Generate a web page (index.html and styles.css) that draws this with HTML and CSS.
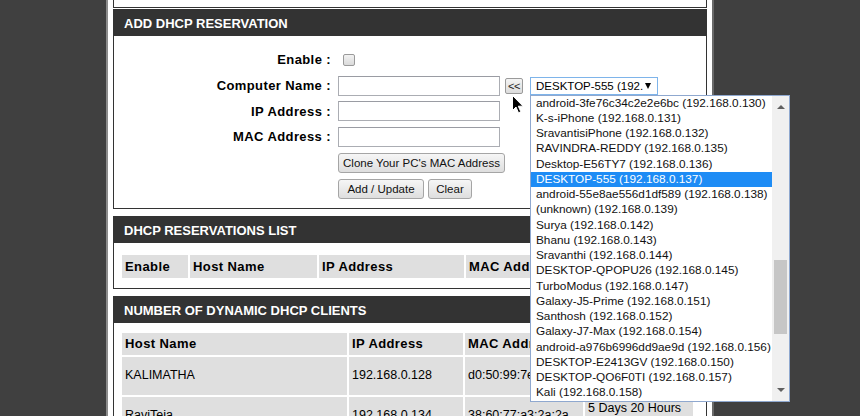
FILE: index.html
```html
<!DOCTYPE html>
<html lang="en">

<head>
    <title>DHCP Reservation</title>
    <link rel="stylesheet" href="styles.css">
</head>

<body>
    <div class="page">
        <!-- end of the section above -->
        <div class="box box-tail"></div>

        <div class="box">
            <div class="box-head">ADD DHCP RESERVATION</div>
            <div class="box-body form">
                <label class="form-label">Enable :</label>
                <div class="form-field"><input type="checkbox" class="check"></div>

                <label class="form-label">Computer Name :</label>
                <div class="form-field">
                    <input type="text" class="text-input">
                    <button class="pick-btn">&lt;&lt;</button>
                    <div class="select">
                        <span class="select-text">DESKTOP-555 (192.</span>
                        <span class="select-arrow"></span>
                        <!-- opened list of the select -->
                        <div class="dropdown">
                            <div class="dropdown-items">
                                <div class="dropdown-item">android-3fe76c34c2e2e6bc (192.168.0.130)</div>
                                <div class="dropdown-item">K-s-iPhone (192.168.0.131)</div>
                                <div class="dropdown-item">SravantisiPhone (192.168.0.132)</div>
                                <div class="dropdown-item">RAVINDRA-REDDY (192.168.0.135)</div>
                                <div class="dropdown-item">Desktop-E56TY7 (192.168.0.136)</div>
                                <div class="dropdown-item selected">DESKTOP-555 (192.168.0.137)</div>
                                <div class="dropdown-item">android-55e8ae556d1df589 (192.168.0.138)</div>
                                <div class="dropdown-item">(unknown) (192.168.0.139)</div>
                                <div class="dropdown-item">Surya (192.168.0.142)</div>
                                <div class="dropdown-item">Bhanu (192.168.0.143)</div>
                                <div class="dropdown-item">Sravanthi (192.168.0.144)</div>
                                <div class="dropdown-item">DESKTOP-QPOPU26 (192.168.0.145)</div>
                                <div class="dropdown-item">TurboModus (192.168.0.147)</div>
                                <div class="dropdown-item">Galaxy-J5-Prime (192.168.0.151)</div>
                                <div class="dropdown-item">Santhosh (192.168.0.152)</div>
                                <div class="dropdown-item">Galaxy-J7-Max (192.168.0.154)</div>
                                <div class="dropdown-item">android-a976b6996dd9ae9d (192.168.0.156)</div>
                                <div class="dropdown-item">DESKTOP-E2413GV (192.168.0.150)</div>
                                <div class="dropdown-item">DESKTOP-QO6F0TI (192.168.0.157)</div>
                                <div class="dropdown-item">Kali (192.168.0.158)</div>
                            </div>
                            <div class="scrollbar">
                                <div class="scroll-btn"><span class="arrow-up"></span></div>
                                <div class="scroll-track"><div class="scroll-thumb"></div></div>
                                <div class="scroll-btn"><span class="arrow-down"></span></div>
                            </div>
                        </div>
                    </div>
                    <!-- mouse pointer -->
                    <svg class="cursor" width="12" height="19" viewBox="0 0 12 19">
                        <path d="M0.5 0.5 L0.5 15.5 L4 12 L6.5 17.8 L8.8 16.8 L6.3 11.2 L11 11.2 Z" fill="#000" stroke="#fff" stroke-width="1"/>
                    </svg>
                </div>

                <label class="form-label">IP Address :</label>
                <div class="form-field"><input type="text" class="text-input"></div>

                <label class="form-label">MAC Address :</label>
                <div class="form-field"><input type="text" class="text-input"></div>

                <div></div>
                <div class="form-field"><button class="btn btn-clone">Clone Your PC's MAC Address</button></div>

                <div></div>
                <div class="form-field">
                    <button class="btn btn-add">Add / Update</button>
                    <button class="btn btn-clear">Clear</button>
                </div>
            </div>
        </div>

        <div class="box box-list">
            <div class="box-head">DHCP RESERVATIONS LIST</div>
            <div class="box-body">
                <table class="grid">
                    <colgroup>
                        <col style="width: 66px">
                        <col style="width: 127px">
                        <col style="width: 145px">
                        <col>
                    </colgroup>
                    <tr class="grid-head">
                        <td>Enable</td>
                        <td>Host Name</td>
                        <td>IP Address</td>
                        <td>MAC Address</td>
                    </tr>
                </table>
            </div>
        </div>

        <div class="box box-clients">
            <div class="box-head">NUMBER OF DYNAMIC DHCP CLIENTS</div>
            <div class="box-body">
                <table class="grid">
                    <colgroup>
                        <col style="width: 225px">
                        <col style="width: 114px">
                        <col style="width: 118px">
                        <col style="width: 108px">
                    </colgroup>
                    <tr class="grid-head">
                        <td>Host Name</td>
                        <td>IP Address</td>
                        <td>MAC Address</td>
                        <td>Expired Time</td>
                    </tr>
                    <tr class="grid-row">
                        <td>KALIMATHA</td>
                        <td>192.168.0.128</td>
                        <td>d0:50:99:7e:1c:4b</td>
                        <td>5 Days 21 Hours 12 Minutes</td>
                    </tr>
                    <tr class="grid-row">
                        <td>RaviTeja</td>
                        <td>192.168.0.134</td>
                        <td>38:60:77:a3:2a:2a</td>
                        <td>5 Days 20 Hours 41 Minutes</td>
                    </tr>
                </table>
            </div>
        </div>
    </div>
</body>

</html>
```

FILE: styles.css
```css
body {
    margin: 0;
    padding: 0;
    background-color: #404040;
    font-family: "Liberation Sans", Arial, sans-serif;
    color: #000;
    overflow: hidden;
}

/* white column in the middle */
.page {
    width: 594px;
    min-height: 100vh;
    margin-left: 106px;
    padding: 0 5px;
    background-color: #fff;
    border-left: 2px solid #8c8c8c;
    border-right: 2px solid #6a6a6a;
}

/* section boxes */
.box {
    border: 1px solid #333;
    background-color: #fff;
    margin-top: 7px;
}

.box-tail {
    height: 7px;
    border-top: none;
    margin-top: 0;
}

.box-tail + .box {
    margin-top: 1px;
}

.box-head {
    height: 26px;
    line-height: 27px;
    padding-left: 10px;
    background-color: #333;
    color: #fff;
    font-size: 13px;
    font-weight: bold;
}

.box-list .box-body {
    padding: 10px 0 8px 6px;
}

.box-clients .box-body {
    padding: 8px 0 0 6px;
    height: 120px;
}

/* add reservation form */
.form {
    display: grid;
    grid-template-columns: 217px 1fr;
    grid-auto-rows: 25.8px;
    column-gap: 7px;
    padding: 11px 0 6px 0;
}

.form-label {
    text-align: right;
    font-size: 13px;
    font-weight: bold;
    letter-spacing: 0.4px;
    line-height: 25.8px;
}

.form-field {
    display: flex;
    align-items: center;
    position: relative;
}

.check {
    appearance: none;
    width: 12px;
    height: 12px;
    margin: 0 0 0 5px;
    border: 1px solid #9a9a9a;
    border-radius: 2px;
    background: linear-gradient(#f2f2f2, #dadada);
}

.text-input {
    box-sizing: border-box;
    width: 162px;
    height: 20px;
    margin: 0;
    border: 1px solid #abadb3;
    border-top-color: #9a9ca3;
    background-color: #fff;
}

.pick-btn {
    box-sizing: border-box;
    width: 18px;
    height: 16px;
    margin: 1px 0 0 5px;
    padding: 0;
    border: 1px solid #9a9a9a;
    border-radius: 2px;
    background: linear-gradient(#f4f4f4, #dcdcdc);
    font-family: "Liberation Sans", Arial, sans-serif;
    font-size: 11px;
    line-height: 13px;
    letter-spacing: -0.5px;
    color: #222;
}

.select {
    position: relative;
    box-sizing: border-box;
    width: 128px;
    height: 18px;
    margin-left: 7px;
    padding: 0 5px;
    display: flex;
    align-items: center;
    justify-content: space-between;
    border: 1px solid #7eb4ea;
    background-color: #fff;
    font-size: 11.5px;
}

.select-text {
    white-space: nowrap;
    overflow: hidden;
}

.select-arrow {
    width: 0;
    height: 0;
    margin-right: 1px;
    border-left: 3.5px solid transparent;
    border-right: 3.5px solid transparent;
    border-top: 6px solid #000;
}

/* the open option list */
.dropdown {
    position: absolute;
    top: 17px;
    left: -1px;
    z-index: 10;
    display: flex;
    width: 258px;
    border: 1px solid #8fa8cf;
    background-color: #fff;
}

.dropdown-items {
    width: 241px;
}

.dropdown-item {
    height: 15.26px;
    line-height: 15.26px;
    padding-left: 5px;
    font-size: 11.8px;
    white-space: nowrap;
    color: #111;
}

.dropdown-item.selected {
    background-color: #1e8cf5;
    color: #fff;
}

.scrollbar {
    width: 17px;
    display: flex;
    flex-direction: column;
    background-color: #f0f0f0;
}

.scroll-btn {
    height: 17px;
    display: flex;
    align-items: center;
    justify-content: center;
}

.scroll-btn:first-child {
    padding-top: 3px;
}

.scroll-btn:last-child {
    padding-bottom: 2px;
}

.arrow-up,
.arrow-down {
    width: 0;
    height: 0;
    border-left: 4px solid transparent;
    border-right: 4px solid transparent;
}

.arrow-up {
    border-bottom: 4px solid #606060;
}

.arrow-down {
    border-top: 4px solid #606060;
}

.scroll-track {
    flex: 1;
    padding: 0 2px;
}

.scroll-thumb {
    height: 74px;
    margin-top: 144px;
    background-color: #c6c6c6;
}

.cursor {
    position: absolute;
    left: 174px;
    top: 22px;
    z-index: 20;
}

/* form buttons */
.btn {
    box-sizing: border-box;
    height: 20px;
    margin: 0;
    padding: 0;
    border: 1px solid #a5a5a5;
    border-radius: 3px;
    background: linear-gradient(#f6f6f6, #dedede);
    font-family: "Liberation Sans", Arial, sans-serif;
    font-size: 11.5px;
    color: #111;
}

.btn-clone {
    width: 167px;
}

.btn-add {
    width: 86px;
}

.btn-clear {
    width: 44px;
    margin-left: 4px;
}

/* tables */
.grid {
    table-layout: fixed;
    width: 575px;
    border-spacing: 2px;
}

.grid td {
    padding: 0 3px;
    background-color: #dfdfdf;
    white-space: nowrap;
    overflow: hidden;
}

.grid-head td {
    height: 23px;
    font-size: 13px;
    font-weight: bold;
    letter-spacing: 0.4px;
}

.box-clients .grid-head td {
    height: 22px;
}

.grid-row td {
    height: 38px;
    font-size: 12.5px;
    line-height: 15px;
}

.grid-row td:last-child {
    white-space: normal;
}
```
